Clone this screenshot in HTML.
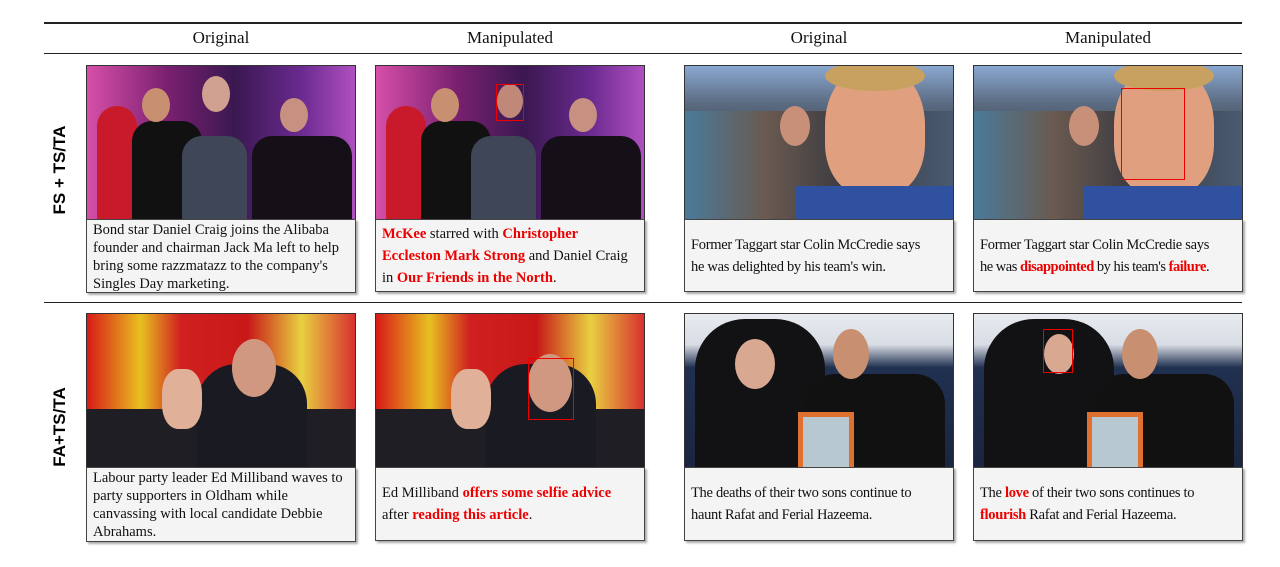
<!DOCTYPE html>
<html><head><style>
body{margin:0;width:1280px;height:567px;background:#fff;position:relative;overflow:hidden;font-family:"Liberation Serif",serif}
.hr{position:absolute;left:44px;width:1198px;background:#222}
.h{position:absolute;top:28px;font-size:17px;width:270px;text-align:center;color:#111}
.lab{position:absolute;font-family:"Liberation Sans",sans-serif;font-weight:bold;font-size:17px;transform:rotate(-90deg);transform-origin:center;white-space:nowrap;width:140px;text-align:center}
.img{position:absolute;width:268px;height:153px;border:1px solid #333;overflow:hidden}
.cap{position:absolute;width:254px;background:#f4f4f4;border:1px solid #444;box-shadow:2px 2px 2px #aaa;font-size:14.5px;color:#111;padding:0 8px 0 6px;box-sizing:content-box}
.c{letter-spacing:-0.3px;white-space:nowrap;overflow:hidden}
.r{color:#e00;font-weight:bold}
.a{position:absolute}
.box{position:absolute;border:1.5px solid #e00}
</style></head><body>
<div class="hr" style="top:22px;height:2px"></div>
<div class="hr" style="top:53px;height:1px"></div>
<div class="hr" style="top:302px;height:1px"></div>
<div class="h" style="left:86px">Original</div>
<div class="h" style="left:375px">Manipulated</div>
<div class="h" style="left:684px">Original</div>
<div class="h" style="left:973px">Manipulated</div>
<div class="lab" style="left:-10px;top:160px">FS + TS/TA</div>
<div class="lab" style="left:-10px;top:417px">FA+TS/TA</div>

<div class="img" style="left:86px;top:65px;background:linear-gradient(90deg,#d64fa8,#7a2070 30%,#3a1850 55%,#6a2a90 80%,#b050c0)">
 <div class="a" style="left:10px;top:40px;width:40px;height:113px;background:#c81a2a;border-radius:20px 20px 0 0"></div>
 <div class="a" style="left:45px;top:55px;width:70px;height:98px;background:#111;border-radius:20px 20px 0 0"></div>
 <div class="a" style="left:95px;top:70px;width:65px;height:83px;background:#3e4658;border-radius:20px 20px 0 0"></div>
 <div class="a" style="left:165px;top:70px;width:100px;height:83px;background:#151018;border-radius:20px 20px 0 0"></div>
 <div class="a" style="left:55px;top:22px;width:28px;height:34px;background:#c89070;border-radius:50%"></div>
 <div class="a" style="left:115px;top:10px;width:28px;height:36px;background:#d0a090;border-radius:50%"></div>
 <div class="a" style="left:193px;top:32px;width:28px;height:34px;background:#c89080;border-radius:50%"></div>
</div>
<div class="cap" style="left:86px;top:219px;height:71px;line-height:18px;padding-top:1px">Bond star Daniel Craig joins the Alibaba founder and chairman Jack Ma left to help bring some razzmatazz to the company's Singles Day marketing.</div>
<div class="img" style="left:375px;top:65px;background:linear-gradient(90deg,#d64fa8,#7a2070 30%,#3a1850 55%,#6a2a90 80%,#b050c0)">
 <div class="a" style="left:10px;top:40px;width:40px;height:113px;background:#c81a2a;border-radius:20px 20px 0 0"></div>
 <div class="a" style="left:45px;top:55px;width:70px;height:98px;background:#111;border-radius:20px 20px 0 0"></div>
 <div class="a" style="left:95px;top:70px;width:65px;height:83px;background:#3e4658;border-radius:20px 20px 0 0"></div>
 <div class="a" style="left:165px;top:70px;width:100px;height:83px;background:#151018;border-radius:20px 20px 0 0"></div>
 <div class="a" style="left:55px;top:22px;width:28px;height:34px;background:#c89070;border-radius:50%"></div>
 <div class="a" style="left:121px;top:18px;width:26px;height:34px;background:#c08878;border-radius:50%"></div>
 <div class="a" style="left:193px;top:32px;width:28px;height:34px;background:#c89080;border-radius:50%"></div>
 <div class="box" style="left:120px;top:18px;width:26px;height:35px"></div>
</div>
<div class="cap" style="left:375px;top:219px;height:71px;line-height:22px;display:flex;flex-direction:column;justify-content:center"><span><span class="r">McKee</span> starred with <span class="r">Christopher Eccleston Mark Strong</span> and Daniel Craig in <span class="r">Our Friends in the North</span>.</span></div>

<div class="img" style="left:684px;top:65px;background:linear-gradient(180deg,#8aa8d0 0,#5a6a80 25%,#4a5060 45%,#3a3a44 70%,#2a2a32)">
 <div class="a" style="left:0;top:45px;width:268px;height:108px;background:linear-gradient(90deg,#4a7a9a,#6a5a50 30%,#3a3a40 60%,#4a5a70)"></div>
 <div class="a" style="left:140px;top:0;width:100px;height:130px;background:#e0a080;border-radius:45% 45% 40% 40%"></div>
 <div class="a" style="left:140px;top:-5px;width:100px;height:30px;background:#c8a060;border-radius:50%"></div>
 <div class="a" style="left:110px;top:120px;width:158px;height:33px;background:#3050a0"></div>
 <div class="a" style="left:95px;top:40px;width:30px;height:40px;background:#c89078;border-radius:50%"></div>
</div>
<div class="cap c" style="left:684px;top:219px;height:71px;line-height:22px;display:flex;flex-direction:column;justify-content:center"><span>Former Taggart star Colin McCredie says<br>he was delighted by his team's win.</span></div>
<div class="img" style="left:973px;top:65px;background:linear-gradient(180deg,#8aa8d0 0,#5a6a80 25%,#4a5060 45%,#3a3a44 70%,#2a2a32)">
 <div class="a" style="left:0;top:45px;width:268px;height:108px;background:linear-gradient(90deg,#4a7a9a,#6a5a50 30%,#3a3a40 60%,#4a5a70)"></div>
 <div class="a" style="left:140px;top:0;width:100px;height:130px;background:#e0a080;border-radius:45% 45% 40% 40%"></div>
 <div class="a" style="left:140px;top:-5px;width:100px;height:30px;background:#c8a060;border-radius:50%"></div>
 <div class="a" style="left:110px;top:120px;width:158px;height:33px;background:#3050a0"></div>
 <div class="a" style="left:95px;top:40px;width:30px;height:40px;background:#c89078;border-radius:50%"></div>
 <div class="box" style="left:147px;top:22px;width:62px;height:90px"></div>
</div>
<div class="cap c" style="left:973px;top:219px;height:71px;line-height:22px;display:flex;flex-direction:column;justify-content:center"><span>Former Taggart star Colin McCredie says<br><span style="letter-spacing:-0.5px">he was <span class="r">disappointed</span> by his team's <span class="r">failure</span>.</span></span></div>

<div class="img" style="left:86px;top:313px;background:linear-gradient(90deg,#d81a18,#e8c020 20%,#d02020 35%,#c81818 60%,#e8d040 80%,#d83030)">
 <div class="a" style="left:0;top:95px;width:268px;height:58px;background:#1e1e24"></div>
 <div class="a" style="left:110px;top:50px;width:110px;height:103px;background:#1a1a22;border-radius:40px 40px 0 0"></div>
 <div class="a" style="left:145px;top:25px;width:44px;height:58px;background:#d09880;border-radius:50%"></div>
 <div class="a" style="left:75px;top:55px;width:40px;height:60px;background:#e0b098;border-radius:40%"></div>
</div>
<div class="cap" style="left:86px;top:467px;height:72px;line-height:18px;padding-top:1px">Labour party leader Ed Milliband waves to party supporters in Oldham while canvassing with local candidate Debbie Abrahams.</div>
<div class="img" style="left:375px;top:313px;background:linear-gradient(90deg,#d81a18,#e8c020 20%,#d02020 35%,#c81818 60%,#e8d040 80%,#d83030)">
 <div class="a" style="left:0;top:95px;width:268px;height:58px;background:#1e1e24"></div>
 <div class="a" style="left:110px;top:50px;width:110px;height:103px;background:#1a1a22;border-radius:40px 40px 0 0"></div>
 <div class="a" style="left:152px;top:40px;width:44px;height:58px;background:#d09880;border-radius:50%"></div>
 <div class="a" style="left:75px;top:55px;width:40px;height:60px;background:#e0b098;border-radius:40%"></div>
 <div class="box" style="left:152px;top:44px;width:44px;height:60px"></div>
</div>
<div class="cap" style="left:375px;top:467px;height:72px;line-height:22px;display:flex;flex-direction:column;justify-content:center"><span>Ed Milliband <span class="r">offers some selfie advice</span> after <span class="r">reading this article</span>.</span></div>

<div class="img" style="left:684px;top:313px;background:linear-gradient(180deg,#e8ecf0 0,#d8dce4 20%,#203050 35%,#1a2540 100%)">
 <div class="a" style="left:10px;top:5px;width:130px;height:148px;background:#121214;border-radius:50px 50px 0 0"></div>
 <div class="a" style="left:50px;top:25px;width:40px;height:50px;background:#d8a890;border-radius:50%"></div>
 <div class="a" style="left:120px;top:60px;width:140px;height:93px;background:#111;border-radius:30px 30px 0 0"></div>
 <div class="a" style="left:148px;top:15px;width:36px;height:50px;background:#c89070;border-radius:50%"></div>
 <div class="a" style="left:113px;top:98px;width:56px;height:55px;background:#e07030"></div>
 <div class="a" style="left:118px;top:103px;width:46px;height:50px;background:#b8c8d0"></div>
</div>
<div class="cap c" style="left:684px;top:467px;height:72px;line-height:22px;display:flex;flex-direction:column;justify-content:center"><span>The deaths of their two sons continue to<br>haunt Rafat and Ferial Hazeema.</span></div>
<div class="img" style="left:973px;top:313px;background:linear-gradient(180deg,#e8ecf0 0,#d8dce4 20%,#203050 35%,#1a2540 100%)">
 <div class="a" style="left:10px;top:5px;width:130px;height:148px;background:#121214;border-radius:50px 50px 0 0"></div>
 <div class="a" style="left:70px;top:20px;width:30px;height:40px;background:#d8a890;border-radius:50%"></div>
 <div class="a" style="left:120px;top:60px;width:140px;height:93px;background:#111;border-radius:30px 30px 0 0"></div>
 <div class="a" style="left:148px;top:15px;width:36px;height:50px;background:#c89070;border-radius:50%"></div>
 <div class="a" style="left:113px;top:98px;width:56px;height:55px;background:#e07030"></div>
 <div class="a" style="left:118px;top:103px;width:46px;height:50px;background:#b8c8d0"></div>
 <div class="box" style="left:69px;top:15px;width:28px;height:42px"></div>
</div>
<div class="cap c" style="left:973px;top:467px;height:72px;line-height:22px;display:flex;flex-direction:column;justify-content:center"><span>The <span class="r">love</span> of their two sons continues to<br><span class="r">flourish</span> Rafat and Ferial Hazeema.</span></div>
</body></html>
